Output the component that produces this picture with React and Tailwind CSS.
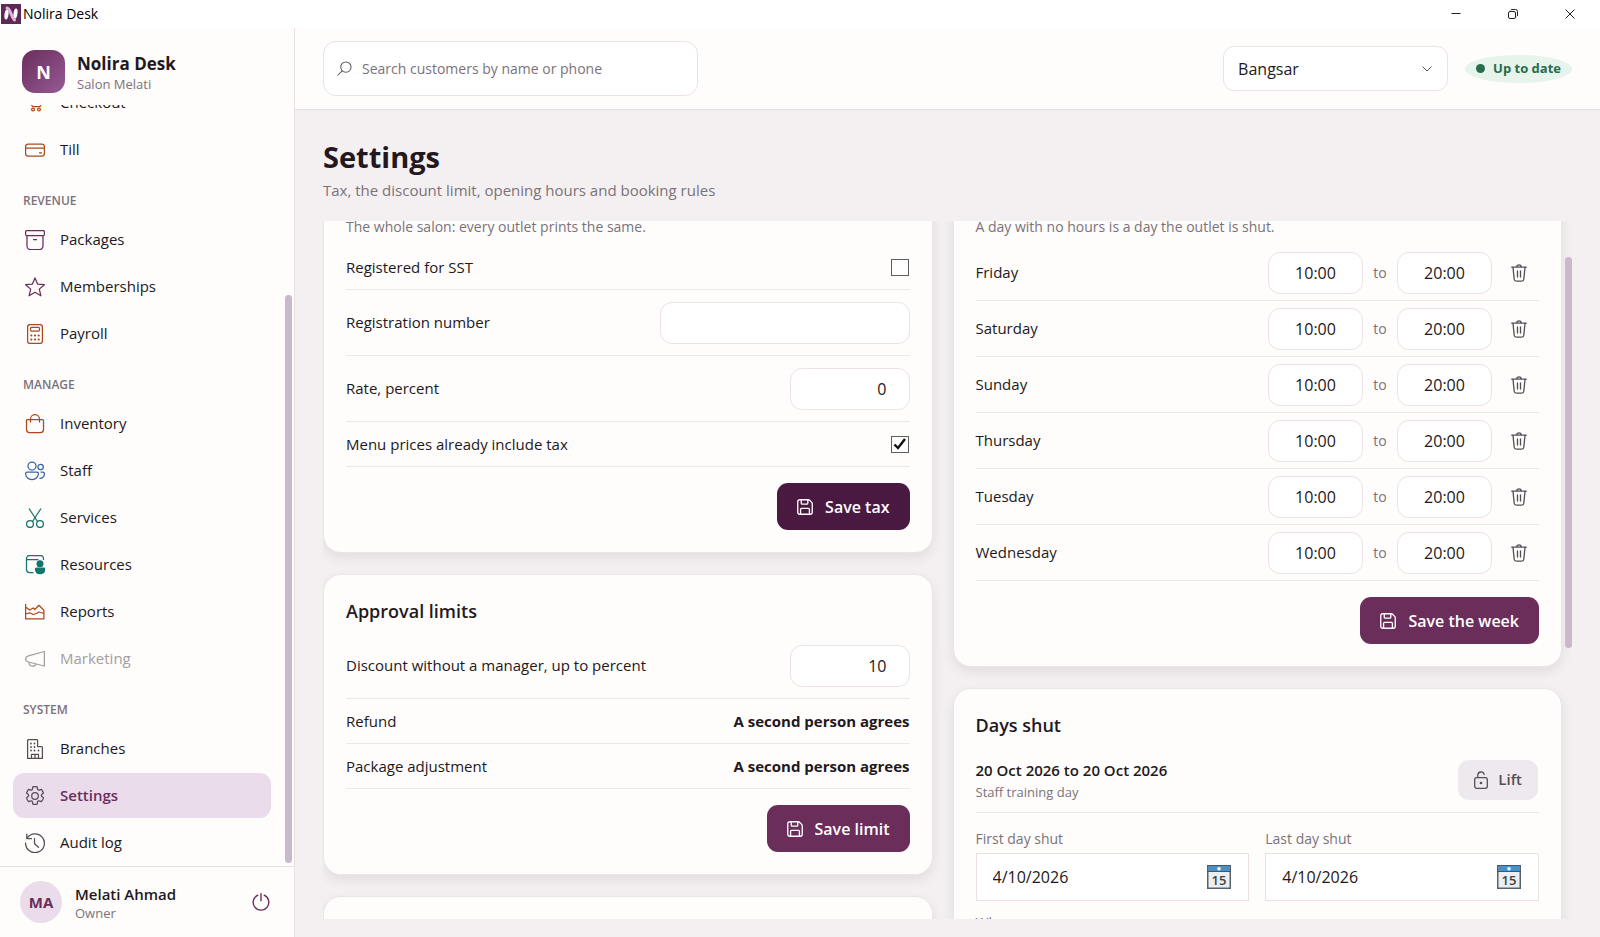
import React from "react";

const icons = {
  cart: (
    <>
      <path d="M2.5 3h1.2c.6 0 1 .4 1.2 1l2 8.5c.1.6.6 1 1.2 1h6.4c.6 0 1-.4 1.2-1L17.5 6H5.4" />
      <circle cx="8" cy="16.5" r="1.4" />
      <circle cx="14" cy="16.5" r="1.4" />
    </>
  ),
  card: (
    <>
      <rect x="0.6" y="4" width="18.8" height="12" rx="2.5" />
      <path d="M.6 8h18.8M14 12.8h3" />
    </>
  ),
  box: (
    <>
      <rect x="0.6" y="0.6" width="18.8" height="5" rx="1.2" />
      <path d="M2 5.600v10.400a3.500 3.500 0 0 0 3.500 3.500h9a3.500 3.500 0 0 0 3.500-3.500V5.600M8 9.500h4" />
    </>
  ),
  star: <path d="M10 .9l2.700 6.300 6.700.5-5.100 4.400 1.600 6.700L10 15.300l-5.900 3.500 1.600-6.700L.6 7.700l6.700-.5z" />,
  calculator: (
    <>
      <rect x="2.6" y="0.6" width="14.8" height="18.8" rx="2.5" />
      <rect x="5.500" y="3.400" width="9" height="3.600" rx="1" />
      <path strokeWidth="2.2" strokeLinecap="round" d="M6.300 11.500h.01M10 11.500h.01M13.700 11.500h.01M6.300 15.500h.01M10 15.500h.01M13.700 15.500h.01" />
    </>
  ),
  bag: (
    <>
      <path d="M2.500 5.500h15a1 1 0 0 1 1 1v9a3 3 0 0 1-3 3h-11a3 3 0 0 1-3-3v-9a1 1 0 0 1 1-1z" />
      <path d="M5.500 8.500V5a4.500 4.400 0 0 1 9 0v3.500" />
    </>
  ),
  people: (
    <>
      <circle cx="7" cy="5" r="4" />
      <circle cx="15.600" cy="6" r="2.700" />
      <path d="M2.300 11h9.400a1.700 1.700 0 0 1 1.700 1.700c0 3.200-2.600 5.800-6.400 5.800S.6 15.900.6 12.700A1.700 1.700 0 0 1 2.300 11zM15.500 11h2.200a1.700 1.700 0 0 1 1.700 1.700c0 3-2 5-5 4.600" />
    </>
  ),
  cut: (
    <>
      <path d="M4 .5l8.500 13M16 .5L7.500 13.500" />
      <circle cx="5" cy="16" r="3.400" />
      <circle cx="15" cy="16" r="3.400" />
    </>
  ),
  resource: (
    <>
      <path d="M8.500 17.500h-4a3 3 0 0 1-3-3v-11a3 3 0 0 1 3-3h11a3 3 0 0 1 3 3V5M1.500 4.500h12" />
      <circle cx="15" cy="8.700" r="2.900" fill="currentColor" />
      <path fill="currentColor" d="M11.500 13h7.200c.6 0 1 .4 1 1 0 3-2 4.700-4.600 4.700s-4.600-1.700-4.600-4.700c0-.6.4-1 1-1z" />
    </>
  ),
  chart: <path d="M.6 2v14.900h18.900M.6 5l4 3 3.600-2 1.600 1.500L13.900 3.300l5 5v8.400M.6 12l4.200-1.200 3.400 1.700 3.200-1 2.600-1.500 4.900 1.500" />,
  megaphone: <path d="M19.400 2.500v14.500l-16-4c-1.800-.5-2.800-1.500-2.800-3s1-2.600 2.800-3.200zM4 13.200c0 2.500 1.500 4 3.500 4s3.300-1 3.700-2.600" />,
  building: (
    <>
      <path d="M2.600 19.400v-17.800a1 1 0 0 1 1-1h8a1 1 0 0 1 1 1v6h3.800a1 1 0 0 1 1 1v10.800zM6.500 19.400v-4h7v4M10 15.500v4" />
      <path strokeWidth="1.800" strokeLinecap="round" d="M6 4.500h.01M9.500 4.500h.01M6 8h.01M9.500 8h.01M6 11.500h.01M9.500 11.500h.01M13.500 11.500h.01" />
    </>
  ),
  gear: (
    <>
      <path d="M10 .6c.8 0 1.500.1 2.200.3l.4 2.300c.1.700.8 1.100 1.500.9l2.200-.8a9.500 9.500 0 0 1 2.200 3.800l-1.800 1.500c-.5.500-.5 1.300 0 1.700l1.800 1.600a9.500 9.500 0 0 1-2.200 3.800l-2.200-.8c-.7-.3-1.400.1-1.500.8l-.4 2.400a9.800 9.800 0 0 1-4.400 0l-.4-2.400c-.1-.7-.8-1.100-1.500-.8l-2.200.8a9.500 9.500 0 0 1-2.200-3.800l1.800-1.600c.5-.4.5-1.200 0-1.700L1.500 7.100a9.500 9.500 0 0 1 2.200-3.800l2.200.8c.7.200 1.400-.2 1.500-.9L7.800.9C8.500.7 9.200.6 10 .6z" />
      <circle cx="10" cy="10" r="3.300" />
    </>
  ),
  history: <path strokeLinecap="round" d="M2.200 5A9.400 9.400 0 1 1 .6 10M1.800 1v4.500h4.700M9.500 5.500v5.200l4 3.600" />,
};

const Icon = ({ name, className }) => (
  <svg viewBox="0 0 20 20" fill="none" stroke="currentColor" strokeWidth="1.25" strokeLinejoin="round" className={className} aria-hidden="true">
    {icons[name]}
  </svg>
);

const navGroups = [
  {
    items: [
      { label: "Checkout", icon: "cart", color: "text-[#a84a1c]" },
      { label: "Till", icon: "card", color: "text-[#a84a1c]" },
    ],
  },
  {
    title: "REVENUE",
    items: [
      { label: "Packages", icon: "box", color: "text-[#6b2d5c]" },
      { label: "Memberships", icon: "star", color: "text-[#6b2d5c]" },
      { label: "Payroll", icon: "calculator", color: "text-[#a84a1c]" },
    ],
  },
  {
    title: "MANAGE",
    items: [
      { label: "Inventory", icon: "bag", color: "text-[#a84a1c]" },
      { label: "Staff", icon: "people", color: "text-[#3a62a8]" },
      { label: "Services", icon: "cut", color: "text-[#14756a]" },
      { label: "Resources", icon: "resource", color: "text-[#14756a]" },
      { label: "Reports", icon: "chart", color: "text-[#a84a1c]" },
      { label: "Marketing", icon: "megaphone", color: "text-[#a39ea1]", disabled: true },
    ],
  },
  {
    title: "SYSTEM",
    items: [
      { label: "Branches", icon: "building", color: "text-[#574d55]" },
      { label: "Settings", icon: "gear", color: "text-[#574d55]", active: true },
      { label: "Audit log", icon: "history", color: "text-[#574d55]" },
    ],
  },
];

const days = ["Friday", "Saturday", "Sunday", "Thursday", "Tuesday", "Wednesday"];

const TitleBar = () => (
  <div className="flex h-7 shrink-0 items-center bg-white text-black">
    <svg viewBox="0 0 20 20" className="ml-px h-5 w-5" aria-hidden="true">
      <rect width="20" height="20" fill="#5d2a55" />
      <ellipse cx="5.500" cy="10.500" rx="2" ry="5" fill="#fff" transform="rotate(8 5.500 10.500)" />
      <ellipse cx="14.500" cy="9.500" rx="2" ry="5" fill="#fff" transform="rotate(8 14.500 9.500)" />
      <path d="M6 4c4 1 3.500 8.500 7.500 12" stroke="#e0b3d8" strokeWidth="3" strokeLinecap="round" fill="none" />
    </svg>
    <span className="ml-0.5 text-sm">Nolira Desk</span>
    <div className="ml-auto flex pr-0.5 text-[#222]">
      <button type="button" aria-label="Minimize" className="flex h-7 w-[57px] items-center justify-center">
        <svg viewBox="0 0 10 10" className="h-2.5 w-2.5" fill="none" stroke="currentColor"><path d="M.5 4.500h9" /></svg>
      </button>
      <button type="button" aria-label="Restore" className="flex h-7 w-[57px] items-center justify-center">
        <svg viewBox="0 0 10 10" className="h-2.5 w-2.5" fill="none" stroke="currentColor">
          <rect x="0.500" y="2.500" width="7" height="7" rx="1.500" />
          <path d="M2.500 1.300C2.800.8 3.200.5 4 .5h3.500a2 2 0 0 1 2 2V6c0 .8-.3 1.200-.8 1.500" />
        </svg>
      </button>
      <button type="button" aria-label="Close" className="flex h-7 w-[57px] items-center justify-center">
        <svg viewBox="0 0 10 10" className="h-2.5 w-2.5" fill="none" stroke="currentColor"><path d="M.5.5l9 9M9.500.5l-9 9" /></svg>
      </button>
    </div>
  </div>
);

const NavItem = ({ item }) => (
  <a
    href="#"
    aria-current={item.active ? "page" : undefined}
    aria-disabled={item.disabled}
    className={`flex h-[45px] shrink-0 items-center gap-[15px] rounded-[11px] px-3 text-[15px] ${
      item.active ? "bg-[#eadcea] font-semibold text-[#6b2d5c]" : item.disabled ? "text-[#a39ea1]" : ""
    }`}
  >
    <Icon name={item.icon} className={`h-5 w-5 ${item.color}`} />
    {item.label}
  </a>
);

const Sidebar = () => (
  <aside className="flex w-[295px] shrink-0 flex-col border-r border-[#eadfe4] bg-[#fefdfc]">
    <div className="flex shrink-0 items-center gap-3 px-[22px] pt-[22px] pb-3">
      <div className="flex h-[43px] w-[43px] items-center justify-center rounded-[13px] bg-gradient-to-br from-[#6b2d5c] to-[#965a96] text-lg font-bold text-white">
        N
      </div>
      <div className="pt-0.5">
        <p className="text-[17px] leading-[22px] font-bold">Nolira Desk</p>
        <p className="text-[13px] leading-[18px] text-[#7b7279]">Salon Melati</p>
      </div>
    </div>
    <div className="flex min-h-0 flex-1">
      <nav className="flex flex-1 flex-col justify-end gap-0.5 overflow-hidden pr-[14px] pb-px pl-[13px]">
        {navGroups.map((group, i) => (
          <React.Fragment key={i}>
            {group.title ? (
              <h2 className="shrink-0 px-[10px] pt-[17px] pb-1 text-xs leading-5 font-semibold text-[#7b7279]">{group.title}</h2>
            ) : null}
            {group.items.map((item) => (
              <NavItem key={item.label} item={item} />
            ))}
          </React.Fragment>
        ))}
      </nav>
      <div className="flex w-[9px] flex-col justify-end pr-0.5 pb-[3px]">
        <div className="h-3/4 rounded-full bg-[#c9b9c9]" />
      </div>
    </div>
    <div className="flex h-[71px] shrink-0 items-center gap-[13px] border-t border-[#eadfe4] pr-6 pl-5">
      <div className="flex h-[42px] w-[42px] items-center justify-center rounded-full bg-[#eadcea] text-[15px] font-bold text-[#6b2d5c]">MA</div>
      <div className="flex-1 pt-0.5">
        <p className="text-[15px] leading-5 font-semibold">Melati Ahmad</p>
        <p className="text-[13px] leading-[18px] text-[#7b7279]">Owner</p>
      </div>
      <button type="button" aria-label="Sign out" className="text-[#6b2d5c]">
        <svg viewBox="0 0 18 18" className="h-[18px] w-[18px]" fill="none" stroke="currentColor" strokeWidth="1.400" strokeLinecap="round">
          <path d="M9 .8v7M5.800 2.200a7.800 7.800 0 1 0 6.400 0" />
        </svg>
      </button>
    </div>
  </aside>
);

const Header = () => (
  <header className="flex h-[82px] shrink-0 items-center justify-between border-b border-[#e6dfe3] bg-[#fefdfc] px-7">
    <label className="flex h-[55px] w-[375px] items-center gap-[10px] rounded-[13px] border border-[#ebe1e7] bg-white px-[13px]">
      <svg viewBox="0 0 16 16" className="h-[15px] w-[15px] shrink-0 text-[#5f565d]" fill="none" stroke="currentColor" strokeWidth="1.100" strokeLinecap="round">
        <circle cx="9.500" cy="6.500" r="5.500" />
        <path d="M5.500 10.500L.8 15.200" />
      </svg>
      <input
        type="text"
        aria-label="Search customers"
        placeholder="Search customers by name or phone"
        className="w-full bg-transparent text-sm outline-none placeholder:text-[#7b7279]"
      />
    </label>
    <div className="flex items-center gap-[17px]">
      <div className="grid items-center">
        <select aria-label="Outlet" className="col-start-1 row-start-1 h-[45px] w-[225px] appearance-none rounded-[11px] border border-[#ebe1e7] bg-white px-[14px] text-base">
          <option>Bangsar</option>
        </select>
        <svg viewBox="0 0 10 6" className="pointer-events-none col-start-1 row-start-1 mr-4 h-1.5 w-2.5 justify-self-end text-[#5f565d]" fill="none" stroke="currentColor">
          <path d="M.5.5L5 5 9.500.5" />
        </svg>
      </div>
      <div className="flex h-7 items-center gap-2 rounded-[50%] bg-[#e6f4ec] px-[11px] text-[13px] font-bold text-[#256d4b]">
        <span className="h-[9px] w-[9px] rounded-full bg-[#256d4b]" />
        Up to date
      </div>
    </div>
  </header>
);

const Card = ({ title, note, children }) => (
  <section className="rounded-[18px] border border-[#ece4e9] bg-[#fefdfc] p-[22px] shadow-[0_5px_12px_rgba(50,35,45,0.09)]">
    {title ? <h2 className="mb-2 text-lg leading-7 font-semibold">{title}</h2> : null}
    {note ? <p className="mb-2 text-sm leading-5 text-[#7b7279]">{note}</p> : null}
    {children}
  </section>
);

const SaveButton = ({ label, dark }) => (
  <div className="mt-4 flex justify-end">
    <button
      type="button"
      className={`flex h-[47px] items-center gap-3 rounded-[11px] px-5 text-base font-semibold text-white ${dark ? "bg-[#4a1942]" : "bg-[#6b2d5a]"}`}
    >
      <svg viewBox="0 0 17 17" className="h-4 w-4" fill="none" stroke="currentColor" strokeWidth="1.400" strokeLinejoin="round">
        <path d="M2.600.8h9.500c.5 0 .9.200 1.200.5l2.300 2.300c.4.400.6.800.6 1.300v9.300a2 2 0 0 1-2 2H2.800a2 2 0 0 1-2-2V2.800a2 2 0 0 1 2-2" />
        <path d="M4.500.8v3.700c0 .6.400 1 1 1h5c.6 0 1-.4 1-1V.8M3.800 16.200v-5.200c0-.6.400-1 1-1h7.400c.6 0 1 .4 1 1v5.200" />
      </svg>
      {label}
    </button>
  </div>
);

const CheckRow = ({ label, checked }) => (
  <label className="flex h-[45px] items-center justify-between border-b border-[#ece7ea]">
    {label}
    <span className="mr-px grid items-center justify-items-center">
      <input type="checkbox" defaultChecked={checked} className="peer col-start-1 row-start-1 h-[17px] w-[18px] appearance-none border border-[#5f5f5f] bg-white" />
      <svg viewBox="0 0 14 14" className="pointer-events-none invisible col-start-1 row-start-1 h-3.5 w-3.5 peer-checked:visible" fill="none" stroke="#111" strokeWidth="2.400">
        <path d="M1.500 7.500L5 11l7-9" />
      </svg>
    </span>
  </label>
);

const InputRow = ({ label, value, wide }) => (
  <label className="flex h-[66px] items-center justify-between border-b border-[#ece7ea]">
    {label}
    <input
      type="text"
      defaultValue={value}
      className={`h-[42px] rounded-xl border border-[#ebe1e7] bg-white px-[22px] text-right text-base outline-none ${wide ? "w-[250px]" : "w-[120px]"}`}
    />
  </label>
);

const InfoRow = ({ label, value }) => (
  <div className="flex h-[45px] items-center justify-between border-b border-[#ece7ea]">
    <span>{label}</span>
    <span className="font-bold">{value}</span>
  </div>
);

const DayRow = ({ day }) => (
  <div className="flex h-14 items-center border-b border-[#ece7ea]">
    <span className="flex-1">{day}</span>
    <input type="text" aria-label={`${day} opens`} defaultValue="10:00" className="h-[42px] w-[95px] rounded-xl border border-[#ebe1e7] bg-white text-center text-base outline-none" />
    <span className="w-[34px] text-center text-sm text-[#7b7279]">to</span>
    <input type="text" aria-label={`${day} closes`} defaultValue="20:00" className="h-[42px] w-[95px] rounded-xl border border-[#ebe1e7] bg-white text-center text-base outline-none" />
    <button type="button" aria-label={`Remove ${day}`} className="ml-[7px] flex h-10 w-10 items-center justify-center text-[#574d55]">
      <svg viewBox="0 0 16 18" className="h-[18px] w-4" fill="none" stroke="currentColor" strokeWidth="1.300" strokeLinecap="round">
        <path d="M.7 3.200h14.600M5.800 3a2.200 2.200 0 0 1 4.400 0M2 3.400l1.200 11.900a2 2 0 0 0 2 1.800h5.600a2 2 0 0 0 2-1.800L14 3.400M6.500 7v6M9.500 7v6" />
      </svg>
    </button>
  </div>
);

const DateField = ({ label, value }) => (
  <label className="block text-sm leading-5 text-[#7b7279]">
    {label}
    <span className="mt-1 flex h-12 items-center border border-[#ece0e4] bg-white pr-[17px] pl-4">
      <input type="text" defaultValue={value} className="w-full text-base text-[#231820] outline-none" />
      <svg viewBox="0 0 24 24" className="h-6 w-6 shrink-0" aria-hidden="true">
        <rect x="0.750" y="0.750" width="22.500" height="22.500" fill="#eceff2" stroke="#5a6269" strokeWidth="1.500" />
        <rect x="1" y="1" width="22" height="5" fill="#4b8fc4" />
        <path d="M0 6.500h24M0 .5h24" stroke="#4d555c" />
        <circle cx="12" cy="3.800" r="1.800" fill="#fff" />
        <text x="12" y="20" textAnchor="middle" fontSize="13" fontWeight="600" fill="#3d4247">15</text>
      </svg>
    </span>
  </label>
);

const Settings = () => (
  <main className="flex min-h-0 flex-1 flex-col px-7 pt-7 pb-[18px]">
    <h1 className="text-[29px] leading-[38px] font-bold">Settings</h1>
    <p className="mb-[17px] text-[15px] leading-7 text-[#7b7279]">Tax, the discount limit, opening hours and booking rules</p>
    <div className="flex min-h-0 flex-1 overflow-hidden">
      <div className="-mt-[27px] grid flex-1 grid-cols-2 items-start gap-x-5 text-[15px]">
        <div className="flex flex-col gap-[21px]">
          <Card note="The whole salon: every outlet prints the same.">
            <CheckRow label="Registered for SST" />
            <InputRow label="Registration number" value="" wide />
            <InputRow label="Rate, percent" value="0" />
            <CheckRow label="Menu prices already include tax" checked />
            <SaveButton label="Save tax" dark />
          </Card>
          <Card title="Approval limits">
            <InputRow label="Discount without a manager, up to percent" value="10" />
            <InfoRow label="Refund" value="A second person agrees" />
            <InfoRow label="Package adjustment" value="A second person agrees" />
            <SaveButton label="Save limit" />
          </Card>
          <Card />
        </div>
        <div className="flex flex-col gap-[21px]">
          <Card note="A day with no hours is a day the outlet is shut.">
            {days.map((day) => (
              <DayRow key={day} day={day} />
            ))}
            <SaveButton label="Save the week" />
          </Card>
          <Card title="Days shut">
            <div className="flex h-[66px] items-center justify-between border-b border-[#ece7ea]">
              <div>
                <p className="leading-6 font-semibold">20 Oct 2026 to 20 Oct 2026</p>
                <p className="text-[13px] leading-5 text-[#7b7279]">Staff training day</p>
              </div>
              <button type="button" className="mr-px flex h-10 items-center gap-[10px] rounded-[11px] bg-[#eee9ee] px-4 font-semibold text-[#574d55]">
                <svg viewBox="0 0 14 18" className="h-[18px] w-3.5" fill="none" stroke="currentColor" strokeWidth="1.300" strokeLinecap="round">
                  <rect x="0.700" y="6.700" width="12.600" height="10.600" rx="2" />
                  <path d="M3.800 6.500V4a3.200 3.200 0 0 1 6.300-.6" />
                  <circle cx="7" cy="12" r=".7" fill="currentColor" />
                </svg>
                Lift
              </button>
            </div>
            <div className="mt-4 grid grid-cols-2 gap-x-4 gap-y-3">
              <DateField label="First day shut" value="4/10/2026" />
              <DateField label="Last day shut" value="4/10/2026" />
              <label className="col-span-2 text-sm leading-5 text-[#7b7279]">
                Why
                <input type="text" className="mt-1 block h-12 w-full border border-[#ece0e4] bg-white" />
              </label>
            </div>
          </Card>
        </div>
      </div>
      <div className="w-[10px] shrink-0 pt-9 pl-[3px]">
        <div className="h-[59%] rounded-full bg-[#c9b9c9]" />
      </div>
    </div>
  </main>
);

const App = () => (
  <div className="flex h-screen flex-col overflow-hidden bg-[#f4f0f2] font-['Open_Sans','Noto_Sans',sans-serif] text-[#231820]">
    <TitleBar />
    <div className="flex min-h-0 flex-1">
      <Sidebar />
      <div className="flex min-w-0 flex-1 flex-col">
        <Header />
        <Settings />
      </div>
    </div>
  </div>
);

export default App;
